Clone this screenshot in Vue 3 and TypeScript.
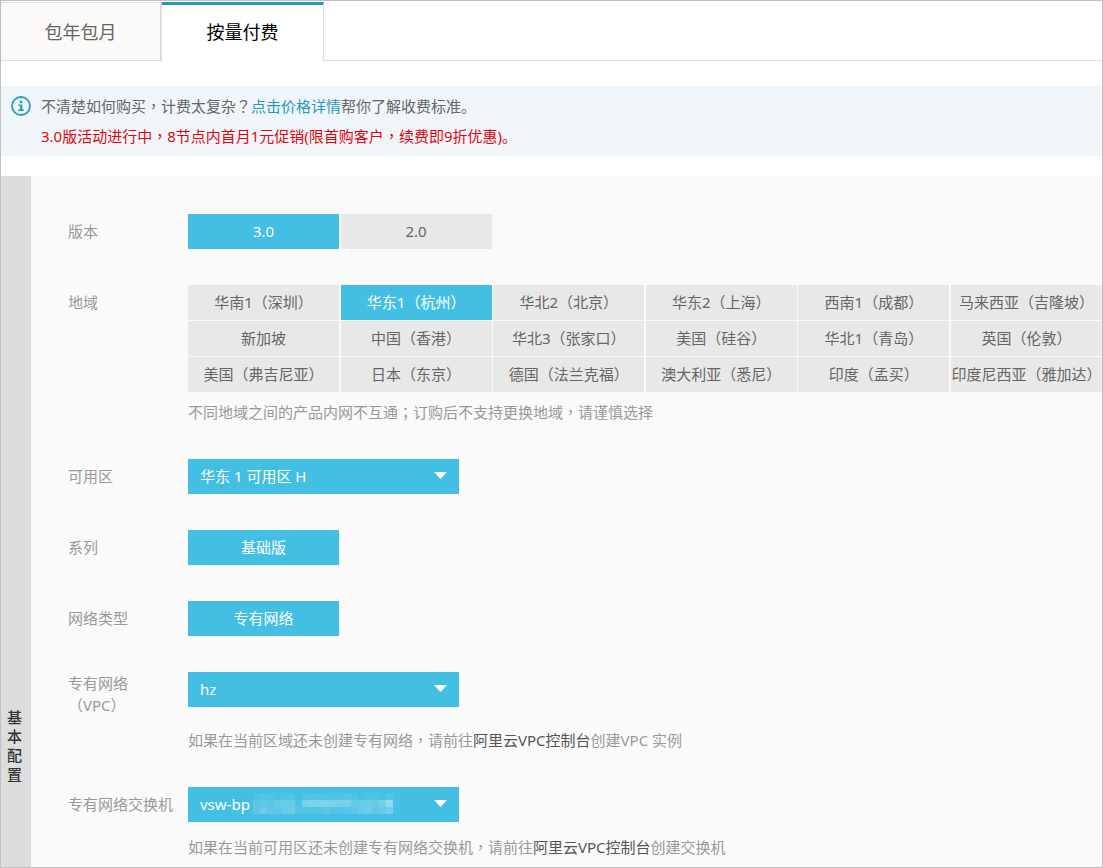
<script setup lang="ts">
import { ref } from 'vue'

const versions: string[] = ['3.0', '2.0']
const regions: string[] = [
  '华南1（深圳）', '华东1（杭州）', '华北2（北京）', '华东2（上海）', '西南1（成都）', '马来西亚（吉隆坡）',
  '新加坡', '中国（香港）', '华北3（张家口）', '美国（硅谷）', '华北1（青岛）', '英国（伦敦）',
  '美国（弗吉尼亚）', '日本（东京）', '德国（法兰克福）', '澳大利亚（悉尼）', '印度（孟买）', '印度尼西亚（雅加达）',
]

const billing = ref('payg')
const version = ref('3.0')
const region = ref('华东1（杭州）')
const zone = ref('h')
const vpc = ref('hz')
const vswitch = ref('vsw-bp')

// White opacity (in percent) of each block that hides the rest of the switch id.
const mask: number[][] = [
  [8, 12, 8, 5, 8, 10, 2, 8, 12, 12, 8, 8, 8, 14, 8, 4, 8, 8, 4, 14, 3],
  [16, 20, 16, 24, 28, 22, 8, 34, 40, 40, 40, 38, 34, 38, 26, 24, 26, 24, 34, 56, 5],
  [16, 28, 20, 16, 24, 30, 12, 12, 12, 12, 16, 12, 12, 14, 18, 26, 30, 20, 26, 32, 3],
]
</script>

<template>
  <main class="page">
    <nav class="tabs">
      <button type="button" class="tab" :class="{ active: billing === 'monthly' }" @click="billing = 'monthly'">包年包月</button>
      <button type="button" class="tab" :class="{ active: billing === 'payg' }" @click="billing = 'payg'">按量付费</button>
    </nav>

    <section class="notice">
      <svg class="info" viewBox="0 0 20 20" aria-hidden="true">
        <circle cx="10" cy="10" r="9" fill="none" stroke="currentColor" stroke-width="1.8" />
        <rect x="8.8" y="4.8" width="2.6" height="2.4" fill="currentColor" />
        <path d="M7.2 8.4H11.4V13.6H13V15H7.2V13.6H8.9V9.8H7.2Z" fill="currentColor" />
      </svg>
      <div>
        <p>不清楚如何购买<span class="mid">，</span>计费太复杂<span class="mid">？</span><a href="#pricing">点击价格详情</a>帮你了解收费标准。</p>
        <p class="promo">3.0版活动进行中<span class="mid">，</span>8节点内首月1元促销(限首购客户<span class="mid">，</span>续费即9折优惠)。</p>
      </div>
    </section>

    <section class="panel">
      <h2 class="side"><span>基本配置</span></h2>
      <form class="form" @submit.prevent>
        <div class="row">
          <span id="version-label" class="label">版本</span>
          <div class="options" role="group" aria-labelledby="version-label">
            <button v-for="v in versions" :key="v" type="button" class="option" :class="{ on: version === v }" @click="version = v">{{ v }}</button>
          </div>
        </div>

        <div class="row">
          <span id="region-label" class="label">地域</span>
          <div class="field">
            <div class="options" role="group" aria-labelledby="region-label">
              <button v-for="r in regions" :key="r" type="button" class="option" :class="{ on: region === r }" @click="region = r">{{ r }}</button>
            </div>
            <p class="help">不同地域之间的产品内网不互通<span class="mid">；</span>订购后不支持更换地域<span class="mid">，</span>请谨慎选择</p>
          </div>
        </div>

        <div class="row">
          <label class="label" for="zone">可用区</label>
          <div class="select">
            <select id="zone" v-model="zone"><option value="h">华东 1 可用区 H</option></select>
            <svg class="arrow" viewBox="0 0 13 7" aria-hidden="true"><path d="M0 0H13L6.5 7Z" /></svg>
          </div>
        </div>

        <div class="row">
          <span id="series-label" class="label">系列</span>
          <div class="options" role="group" aria-labelledby="series-label">
            <button type="button" class="option on">基础版</button>
          </div>
        </div>

        <div class="row">
          <span id="network-label" class="label">网络类型</span>
          <div class="options" role="group" aria-labelledby="network-label">
            <button type="button" class="option on">专有网络</button>
          </div>
        </div>

        <div class="row">
          <label class="label multi" for="vpc">专有网络<br />（VPC）</label>
          <div class="field">
            <div class="select">
              <select id="vpc" v-model="vpc"><option value="hz">hz</option></select>
              <svg class="arrow" viewBox="0 0 13 7" aria-hidden="true"><path d="M0 0H13L6.5 7Z" /></svg>
            </div>
            <p class="help far">如果在当前区域还未创建专有网络<span class="mid">，</span>请前往<a href="#vpc-console">阿里云VPC控制台</a>创建VPC 实例</p>
          </div>
        </div>

        <div class="row">
          <label class="label" for="vswitch">专有网络交换机</label>
          <div class="field">
            <div class="select">
              <select id="vswitch" v-model="vswitch"><option value="vsw-bp">vsw-bp</option></select>
              <svg class="mask" viewBox="0 0 147 21" aria-hidden="true">
                <template v-for="(line, y) in mask" :key="y">
                  <rect v-for="(level, x) in line" :key="x" :x="x * 7" :y="y * 7" width="7" height="7" fill="#d8f0f5" :fill-opacity="level / 100" />
                </template>
              </svg>
              <svg class="arrow" viewBox="0 0 13 7" aria-hidden="true"><path d="M0 0H13L6.5 7Z" /></svg>
            </div>
            <p class="help near">如果在当前可用区还未创建专有网络交换机<span class="mid">，</span>请前往<a href="#vpc-console">阿里云VPC控制台</a>创建交换机</p>
          </div>
        </div>
      </form>
    </section>
  </main>
</template>

<style>
body {
  margin: 0;
}
</style>

<style scoped>
.page {
  box-sizing: border-box;
  min-height: 100vh;
  display: flex;
  flex-direction: column;
  border: 1px solid #c0c0c0;
  background: #fff;
  color: #666;
  font: 15px/20px "Noto Sans", "Noto Sans CJK SC", sans-serif;
}
p,
h2 {
  margin: 0;
}
a {
  text-decoration: none;
}
button,
select {
  border: 0;
  border-radius: 0;
  padding: 0;
  font: inherit;
  cursor: pointer;
}
/* Punctuation centred in its em box */
.mid {
  font-family: "Noto Sans CJK TC", sans-serif;
  line-height: 1;
}
.tabs {
  display: flex;
  height: 60px;
  box-sizing: border-box;
  padding-top: 1px;
  box-shadow: inset 0 -1px #ddd;
}
.tab {
  box-sizing: border-box;
  width: 161px;
  border: solid #ddd;
  border-width: 1px 2px 1px 0;
  background: #fbfaf8;
  color: #666;
  font-size: 18px;
  line-height: 24px;
}
.tab.active {
  width: 162px;
  border-top: 3px solid #1f9ab9;
  border-right-width: 1px;
  border-bottom: 0;
  padding-bottom: 2px;
  background: #fff;
  color: #000;
}
.notice {
  display: flex;
  gap: 10px;
  margin: 25px 0 20px;
  padding: 5px 10px;
  background: #f0f5fa;
  line-height: 30px;
}
.info {
  flex: none;
  width: 20px;
  height: 20px;
  margin-top: 5px;
  color: #2c9dba;
}
.notice a {
  color: #1f9ab9;
}
.promo {
  color: #e1060e;
}
.panel {
  flex: 1;
  display: flex;
  background: #fafafa;
}
.side {
  flex: none;
  display: flex;
  align-items: flex-end;
  justify-content: center;
  box-sizing: border-box;
  width: 30px;
  padding: 0 3px 83px 0;
  background: #ddd;
  color: #333;
  font-size: 15px;
  font-weight: 500;
  line-height: 19px;
}
.side span {
  width: 15px;
  word-break: break-all;
}
.form {
  flex: 1;
  min-width: 0;
  display: flex;
  flex-direction: column;
  gap: 36px;
  padding: 38px 0 10px 37px;
}
.row {
  display: grid;
  grid-template-columns: 120px minmax(0, 1fr);
  align-items: start;
}
.label {
  color: #999;
  line-height: 35px;
}
.label.multi {
  line-height: 22px;
}
.options {
  display: grid;
  grid-template-columns: repeat(6, 151px);
  justify-content: space-between;
  row-gap: 1px;
}
.option {
  height: 35px;
  padding-bottom: 2px;
  background: #e8e8e8;
  color: #666;
  white-space: nowrap;
}
.option.on {
  background: #43bfe3;
  color: #fff;
}
.select {
  position: relative;
  width: 271px;
}
.select select {
  appearance: none;
  display: block;
  width: 100%;
  height: 35px;
  padding: 0 36px 1px 12px;
  background: #43bfe3;
  color: #fff;
}
.arrow {
  position: absolute;
  top: 13px;
  right: 12px;
  width: 13px;
  height: 7px;
  fill: #fff;
  pointer-events: none;
}
.mask {
  position: absolute;
  top: 6px;
  left: 65px;
  width: 147px;
  height: 21px;
  pointer-events: none;
  shape-rendering: crispEdges;
}
.help {
  margin: 10px 0 1px;
  color: #999;
}
.help.far {
  margin-top: 23px;
}
.help.near {
  margin: 15px 0 0;
}
.help a {
  color: #555;
}
</style>
